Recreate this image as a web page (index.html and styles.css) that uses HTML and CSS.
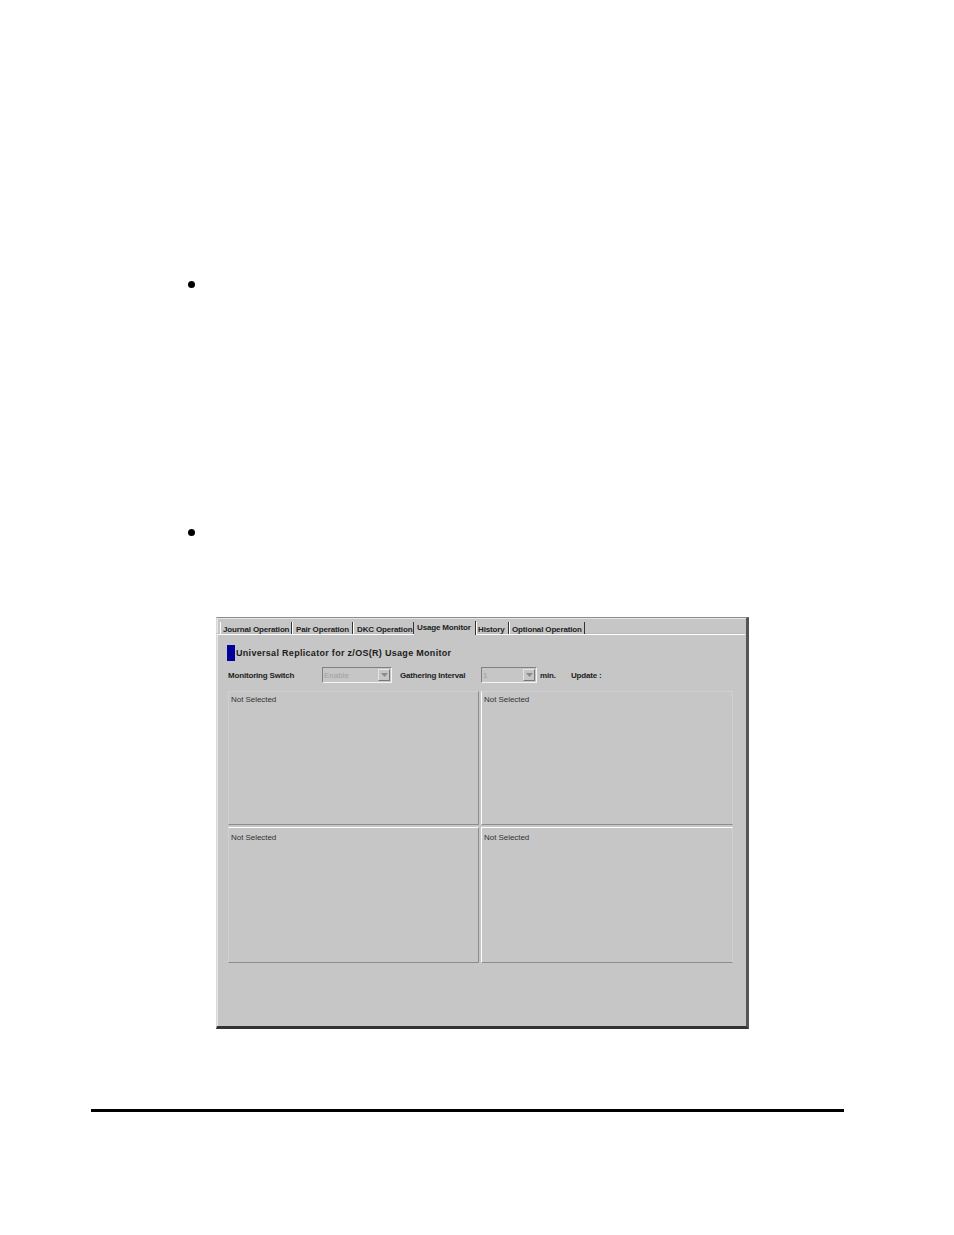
FILE: index.html
```html
<!DOCTYPE html>
<html lang="en">
<head>
  <meta charset="UTF-8">
  <meta name="viewport" content="width=device-width, initial-scale=1.0">
  <title>Usage Monitor</title>
  <link rel="stylesheet" href="styles.css">
</head>
<body>
  <div class="page">
    <div class="bullet bullet-first"></div>
    <div class="bullet bullet-second"></div>

    <div class="window">
      <div class="tabs">
        <span class="tab tab-journal">Journal Operation</span>
        <span class="tab tab-pair">Pair Operation</span>
        <span class="tab tab-dkc">DKC Operation</span>
        <span class="tab tab-usage active">Usage Monitor</span>
        <span class="tab tab-history">History</span>
        <span class="tab tab-optional">Optional Operation</span>
      </div>

      <div class="content">
        <div class="heading">
          <div class="heading-mark"></div>
          <h1>Universal Replicator for z/OS(R) Usage Monitor</h1>
        </div>

        <div class="controls">
          <span class="label label-switch">Monitoring Switch</span>
          <div class="combo combo-switch">
            <span class="combo-value">Enable</span>
            <span class="combo-button"><svg width="7" height="4" viewBox="0 0 7 4"><path d="M0 0h7L3.500 4z" fill="#8a8a8a"/></svg></span>
          </div>
          <span class="label label-interval">Gathering Interval</span>
          <div class="combo combo-interval">
            <span class="combo-value">1</span>
            <span class="combo-button"><svg width="7" height="4" viewBox="0 0 7 4"><path d="M0 0h7L3.500 4z" fill="#8a8a8a"/></svg></span>
          </div>
          <span class="label label-min">min.</span>
          <span class="label label-update">Update :</span>
        </div>

        <div class="graphs">
          <div class="graph graph-top">Not Selected</div>
          <div class="graph graph-top">Not Selected</div>
          <div class="graph graph-bottom">Not Selected</div>
          <div class="graph graph-bottom">Not Selected</div>
        </div>
      </div>
    </div>

    <div class="footer-rule"></div>
  </div>
</body>
</html>
```

FILE: styles.css
```css
html, body {
  margin: 0;
  padding: 0;
  background: #fff;
}
.page {
  height: 1235px;
  box-sizing: border-box;
  padding-top: 281px;
  font-family: 'Liberation Sans', Arial, sans-serif;
  color: #222;
  overflow: hidden;
}
.bullet {
  width: 7px;
  height: 7px;
  margin-left: 188px;
  background: #000;
  border-radius: 50%;
}
.bullet-second {
  margin-top: 241px;
}

/* window */
.window {
  width: 533px;
  height: 412px;
  margin: 81px 0 0 216px;
  box-sizing: border-box;
  background: #c6c6c6;
  border: 1px solid #8f8a94;
  border-right: 3px solid #555;
  border-bottom: 3px solid #333;
  border-left-color: #d8d8d8;
  box-shadow: inset 1px 1px 0 #e6e6e6;
}

/* tabs */
.tabs {
  display: flex;
  align-items: flex-end;
  height: 17px;
  box-sizing: border-box;
  margin-right: 1px;
  padding: 4px 0 0 3px;
  border-bottom: 1px solid #fff;
  box-shadow: inset 0 -1px 0 #bbb;
}
.tab {
  box-sizing: border-box;
  height: 12px;
  padding: 3px 0 0 3px;
  border-right: 1px solid #333;
  border-left: 1px solid #fff;
  font-size: 8px;
  line-height: 10px;
  font-weight: bold;
  letter-spacing: -0.15px;
  white-space: nowrap;
  overflow: hidden;
}
.tab-journal { width: 72px; padding-left: 2px; }
.tab-pair { width: 61px; }
.tab-dkc { width: 61px; }
.tab-usage { width: 62px; }
.tab-history { width: 33px; padding-left: 1px; }
.tab-optional { width: 76px; padding-left: 2px; }
.tab.active {
  position: relative;
  height: 14px;
  margin-bottom: -1px;
  padding-top: 2px;
  background: #c6c6c6;
  border-left: none;
}

/* content */
.content {
  padding: 10px 14px 0 10px;
}
.heading {
  display: flex;
  align-items: center;
  gap: 1px;
  height: 16px;
}
.heading-mark {
  width: 8px;
  height: 16px;
  background: #00009c;
}
h1 {
  margin: 0;
  font-size: 9px;
  line-height: 16px;
  font-weight: bold;
  letter-spacing: 0.3px;
  color: #1c1c1c;
}
.controls {
  display: flex;
  align-items: center;
  height: 16px;
  margin-top: 6px;
  margin-left: 1px;
}
.label {
  font-size: 8px;
  font-weight: bold;
  letter-spacing: -0.18px;
  white-space: nowrap;
}
.label-switch { width: 94px; }
.label-interval { width: 81px; margin-left: 8px; }
.label-min { width: 31px; margin-left: 3px; }
.combo {
  display: flex;
  align-items: center;
  justify-content: space-between;
  box-sizing: border-box;
  height: 16px;
  padding: 1px;
  border: 1px solid #808080;
  border-right-color: #f4f4f4;
  border-bottom-color: #f4f4f4;
}
.combo-switch { width: 70px; }
.combo-interval { width: 56px; }
.combo-value {
  font-size: 8px;
  color: #a0a0a0;
}
.combo-button {
  display: flex;
  align-items: center;
  justify-content: center;
  width: 12px;
  height: 12px;
  background: #c6c6c6;
  border: 1px solid #e4e4e4;
  border-right-color: #777;
  border-bottom-color: #777;
  box-sizing: border-box;
}

/* graph panels */
.graphs {
  display: grid;
  grid-template-columns: 251px 252px;
  grid-template-rows: 134px 136px;
  gap: 2px;
  margin-top: 8px;
  margin-left: 1px;
}
.graph {
  box-sizing: border-box;
  padding: 3px 0 0 2px;
  font-size: 8px;
  line-height: 10px;
  letter-spacing: -0.05px;
  color: #333;
  border: 1px solid #d0d0d0;
  border-right: 1px solid #8c8c8c;
  border-bottom: 1px solid #8c8c8c;
}
.graph-bottom {
  padding-top: 5px;
  border-top: 1px solid #fff;
}
.graph:nth-child(even) {
  border-left: 1px solid #fff;
  border-right: 1px solid #d0d0d0;
}

.footer-rule {
  width: 753px;
  height: 3px;
  margin: 80px 0 0 91px;
  background: #000;
}
```
